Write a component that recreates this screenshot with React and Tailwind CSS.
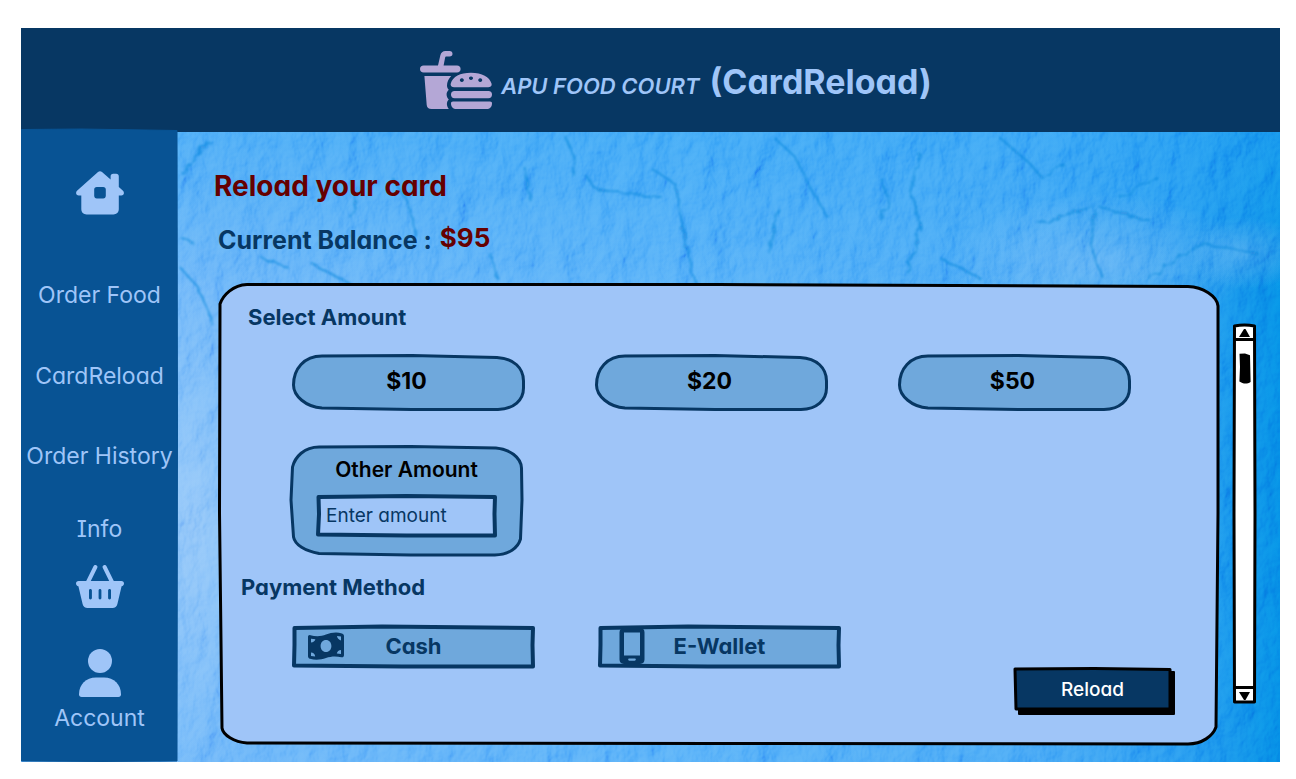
import React from "react";

/* Hand-drawn outline that stretches with the box it decorates. */
function Sketch({ box, d, fill, stroke, width }) {
  return (
    <svg
      aria-hidden="true"
      viewBox={box}
      preserveAspectRatio="none"
      className="pointer-events-none absolute inset-0 -z-10 h-full w-full overflow-visible"
    >
      <path d={d} fill={fill} stroke={stroke} strokeWidth={width} strokeLinejoin="round" vectorEffect="non-scaling-stroke" />
    </svg>
  );
}

function PaperTexture() {
  return (
    <svg
      aria-hidden="true"
      viewBox="0 0 1260 734"
      preserveAspectRatio="none"
      className="pointer-events-none absolute inset-0 -z-10 h-full w-full"
    >
      <defs>
        <linearGradient id="base" x1="0" y1="0" x2="1" y2="0">
          <stop offset="0" stopColor="#6db6fa" />
          <stop offset="0.15" stopColor="#65b1f8" />
          <stop offset="0.5" stopColor="#50acf8" />
          <stop offset="0.8" stopColor="#40a4f5" />
          <stop offset="0.92" stopColor="#1f95ef" />
          <stop offset="1" stopColor="#0488e4" />
        </linearGradient>
        <linearGradient id="top" x1="0" y1="0" x2="0" y2="1">
          <stop offset="0.14" stopColor="#1f9bf3" stopOpacity="0.5" />
          <stop offset="0.36" stopColor="#1f9bf3" stopOpacity="0" />
        </linearGradient>
        <radialGradient id="glow">
          <stop offset="0" stopColor="#a9cff8" stopOpacity="0.6" />
          <stop offset="1" stopColor="#a9cff8" stopOpacity="0" />
        </radialGradient>
        <filter id="crumple" x="0" y="0" width="1" height="1">
          <feTurbulence type="fractalNoise" baseFrequency="0.03 0.02" numOctaves="5" seed="8" />
          <feDiffuseLighting surfaceScale="8" diffuseConstant="0.75" lightingColor="#ffffff">
            <feDistantLight azimuth="215" elevation="42" />
          </feDiffuseLighting>
          <feGaussianBlur stdDeviation="0.7" />
        </filter>
        <filter id="rough" x="-0.1" y="-0.1" width="1.2" height="1.2">
          <feTurbulence type="fractalNoise" baseFrequency="0.08" numOctaves="3" seed="3" />
          <feDisplacementMap in="SourceGraphic" scale="9" />
          <feGaussianBlur stdDeviation="0.8" />
        </filter>
      </defs>
      <rect width="1260" height="734" fill="url(#base)" />
      <rect width="1260" height="734" fill="url(#top)" />
      <ellipse cx="170" cy="500" rx="100" ry="250" fill="url(#glow)" />
      <ellipse cx="1080" cy="235" rx="150" ry="70" fill="url(#glow)" opacity="0.55" />
      <ellipse cx="1225" cy="225" rx="60" ry="36" fill="url(#glow)" opacity="0.4" />
      <rect width="1260" height="734" filter="url(#crumple)" className="opacity-50 mix-blend-soft-light" />
      <g fill="none" stroke="#0b84da" strokeWidth="2" strokeOpacity="0.6" filter="url(#rough)">
        <path d="M545 108 L554 130 L552 148" />
        <path d="M566 148 L574 160 L597 165 L640 168" />
        <path d="M630 140 L654 155 L660 190 L670 240 L678 262" />
        <path d="M754 110 L776 130 L790 160 L808 190 M758 180 L748 225" />
        <path d="M900 125 L892 165 L900 200 L886 245" />
        <path d="M862 150 L868 180 L858 190" />
        <path d="M980 110 L1010 136 L1022 150 L1044 136" />
        <path d="M1016 195 L1076 178 M1076 182 L1070 215 L1082 250" />
        <path d="M1100 170 L1138 150 M1130 192 L1080 180" />
        <path d="M1150 235 L1184 215 L1240 226" />
        <path d="M372 150 L388 176 L396 210 M340 160 L330 190" />
        <path d="M290 235 L310 246 L330 256 M240 230 L268 240" />
        <path d="M160 145 L190 112 M158 208 L172 214 M160 240 L176 258 L186 280 L192 298" />
        <path d="M470 225 L476 250 M505 140 L509 172 M920 230 L960 250 M1128 250 L1150 236" />
      </g>
    </svg>
  );
}

function FoodLogo() {
  return (
    <svg aria-hidden="true" viewBox="0 0 72 58" className="h-[58px] w-[72px] shrink-0" fill="#b4a7d6">
      <path d="M18 14.5 L20.3 4.5 C21 1.5 22.7 0 25.5 0 H29.5 C31.5 0 32.5 1.2 32.5 2.8 C32.5 4.5 31.5 5.6 29.5 5.6 H26.6 C25.6 5.6 25.3 6 25 7.2 L23.6 14.5 H37 C39.2 14.5 40.6 15.9 40.6 18 C40.6 20.2 39.2 21.6 37 21.6 H3.6 C1.4 21.6 0 20.2 0 18 C0 15.9 1.4 14.5 3.6 14.5 Z" />
      <path d="M4.4 25 H31.2 C28.5 28 27 31 27 34.5 C27 36.5 27.8 37.8 28.8 38.7 C27 40.2 26.6 42 26.6 43.4 C26.6 45.3 27.5 47 28.8 48.5 C26.2 51 26.4 55 28.8 58 H11.5 C8.5 58 7 56.6 6.7 54 Z" />
      <path fillRule="evenodd" d="M31 32.5 C32.7 25.8 39.5 21.8 49.3 21.8 C59.5 21.8 66.3 26 68 32.5 C68.6 35 67.2 36.2 65 36.2 H34 C31.6 36.2 30.4 34.8 31 32.5 Z M41 27.3 a1.8 1.8 0 1 0 0.1 0 Z M49.3 25.4 a1.8 1.8 0 1 0 0.1 0 Z M57.7 27.3 a1.8 1.8 0 1 0 0.1 0 Z" transform="translate(-3.3 0) scale(1.1 1)" />
      <rect x="31" y="40" width="41" height="7.2" rx="3.6" />
      <path d="M33 50.6 H70 C71.4 50.6 72 51.3 72 52.4 C72 55.8 69.8 58 66.5 58 H36.5 C33 58 31 55.8 31 52.4 C31 51.3 31.7 50.6 33 50.6 Z" />
    </svg>
  );
}

function HouseIcon() {
  return (
    <svg aria-hidden="true" viewBox="0 0 48 44" className="h-[44px] w-12" fill="currentColor">
      <path
        fillRule="evenodd"
        d="M22 1 C23.3 0 24.7 0 26 1 L34.6 8.6 V5.4 C34.6 3.8 35.6 2.8 37.2 2.8 H40.2 C41.8 2.8 42.8 3.8 42.8 5.4 V15.9 L47 19.8 C48.8 21.6 47.8 24.4 45.3 24.4 H42.8 V38 C42.8 41.4 40.6 43.4 37.4 43.4 H10.6 C7.4 43.4 5.3 41.4 5.3 38 V24.4 H2.8 C0.2 24.4 -0.8 21.6 1 19.8 Z M20.8 16 C19.2 16 18.2 17 18.2 18.6 V24.8 C18.2 26.4 19.2 27.4 20.8 27.4 H27.2 C28.8 27.4 29.8 26.4 29.8 24.8 V18.6 C29.8 17 28.8 16 27.2 16 Z"
      />
    </svg>
  );
}

function BasketIcon() {
  return (
    <svg aria-hidden="true" viewBox="0 0 48 43" className="h-[43px] w-12">
      <path d="M12 17 L19.4 2 M36 17 L28.6 2" fill="none" stroke="currentColor" strokeWidth="4" strokeLinecap="round" />
      <path
        fill="currentColor"
        fillRule="evenodd"
        d="M2.6 16 H45.4 C47 16 48 17 48 18.4 C48 19.8 47 21 45.6 21.2 L41.4 39 C40.8 41.6 39 43 36.4 43 H11.6 C9 43 7.2 41.6 6.6 39 L2.4 21.2 C1 21 0 19.8 0 18.4 C0 17 1 16 2.6 16 Z M14.4 24 C13.6 24 13 24.6 13 25.4 V33 C13 33.8 13.6 34.4 14.4 34.4 S15.9 33.8 15.9 33 V25.4 C15.9 24.6 15.2 24 14.4 24 Z M24 24 C23.2 24 22.6 24.6 22.6 25.4 V33 C22.6 33.8 23.2 34.4 24 34.4 S25.4 33.8 25.4 33 V25.4 C25.4 24.6 24.8 24 24 24 Z M33.6 24 C32.8 24 32.1 24.6 32.1 25.4 V33 C32.1 33.8 32.8 34.4 33.6 34.4 S35 33.8 35 33 V25.4 C35 24.6 34.4 24 33.6 24 Z"
      />
    </svg>
  );
}

function UserIcon() {
  return (
    <svg aria-hidden="true" viewBox="0 0 42 48" className="h-12 w-[42px]" fill="currentColor">
      <circle cx="21" cy="12" r="12" />
      <path d="M17 28.5 H25 C35 28.5 42 35.5 42 45.2 C42 47 41 48 39.4 48 H2.6 C1 48 0 47 0 45.2 C0 35.5 7 28.5 17 28.5 Z" />
    </svg>
  );
}

function CashIcon() {
  return (
    <svg aria-hidden="true" viewBox="0 0 36 28" className="h-7 w-9 shrink-0">
      <path
        fill="currentColor"
        fillRule="evenodd"
        d="M2.4 3.2 C8 4.8 13.5 4.4 18 2.6 C23 0.6 28.5 -0.2 34 1.4 C35.3 1.8 36 2.6 36 4 V23 C36 24.8 34.8 25.5 33.4 25.2 C28 24 23 24.2 18 26 C13 27.8 7.5 28.4 2 26.8 C0.7 26.4 0 25.4 0 24 V5 C0 3.6 1 2.8 2.4 3.2 Z M3 6.8 V10.6 C5.2 10.6 7 9.2 7.4 7.3 Z M3 20.4 V24 L7.2 24.4 C7 22 5.2 20.4 3 20.4 Z M29 4 C29.2 6.2 30.8 8 33 8.4 V4.6 Z M33 18 C30.8 18.2 29.1 19.6 28.8 21.6 L33 22 Z M18 8 C14.8 8 12.6 10.6 12.6 14 C12.6 17.4 14.8 20 18 20 C21.2 20 23.4 17.4 23.4 14 C23.4 10.6 21.2 8 18 8 Z"
      />
    </svg>
  );
}

function PhoneIcon() {
  return (
    <svg aria-hidden="true" viewBox="0 0 26 36" className="h-9 w-[26px] shrink-0">
      <path
        fill="currentColor"
        fillRule="evenodd"
        d="M5 0 H21 C24 0 25.5 1.6 25.5 4.4 V31.6 C25.5 34.4 24 36 21 36 H5 C2 36 0.5 34.4 0.5 31.6 V4.4 C0.5 1.6 2 0 5 0 Z M5 4.4 V27.6 H21 V4.4 Z M10.4 30.6 C9.6 30.6 9.2 31 9.2 31.6 S9.6 32.7 10.4 32.7 H15.6 C16.4 32.7 16.8 32.2 16.8 31.6 S16.4 30.6 15.6 30.6 Z"
      />
    </svg>
  );
}

function AmountButton({ children }) {
  return (
    <button type="button" className="relative isolate h-[57px] pr-1 pb-1 text-[23px] leading-8 font-bold text-black">
      <Sketch
        box="0 0 233 57"
        d="M30 2 L120 1.5 L205 3.5 C222 4.5 231.5 14 231.5 27 V34 C231.5 46 222 55 206 55.5 H120 L30 54 C14 53 1.5 42 1.5 31 C1.5 15 12 2 30 2 Z"
        fill="#6fa8dc"
        stroke="#073763"
        width="3"
      />
      {children}
    </button>
  );
}

function PayButton({ icon, children }) {
  return (
    <button type="button" className="relative isolate grid h-[43px] w-[243px] grid-cols-[36px_1fr_36px] items-center px-4 pb-[2px] text-[22px] leading-8 font-bold text-[#073763]">
      <Sketch
        box="0 0 243 43"
        d="M2.5 3 L90 1.5 L241 3 L240.5 20 L241 41.5 L110 41.5 L2 40.5 L2.5 20 Z"
        fill="#6fa8dc"
        stroke="#073763"
        width="4"
      />
      <span className="flex justify-center">{icon}</span>
      <span>{children}</span>
    </button>
  );
}

function ScrollTrack() {
  return (
    <div className="relative isolate mt-[41px] mb-[42px] flex w-[23px] shrink-0 flex-col">
      <Sketch box="0 0 23 379" d="M1.5 2 C8 0.8 15 0.8 21.5 2 L22 190 L21.5 378 H1.5 L1 190 Z" fill="#fff" stroke="#000" width="3" />
      <button type="button" aria-label="Scroll up" className="flex h-[17px] items-center justify-center border-b-[3px] border-black">
        <svg aria-hidden="true" viewBox="0 0 11 8" className="mt-1 h-2 w-[11px]"><path d="M5 0 H6.5 L11 8 H0 Z" /></svg>
      </button>
      <div className="flex flex-1 justify-center pt-3">
        <svg aria-hidden="true" viewBox="0 0 12 31" className="h-[31px] w-3"><path d="M0.5 0.8 L6 0.6 L11 2.2 L11.6 29 C8 31.4 4 31 0.4 28.6 L1 14 Z" /></svg>
      </div>
      <button type="button" aria-label="Scroll down" className="flex h-[17px] items-center justify-center border-t-[3px] border-black">
        <svg aria-hidden="true" viewBox="0 0 11 8" className="h-2 w-[11px]"><path d="M0 0 H11 L6.5 8 H5 Z" /></svg>
      </button>
    </div>
  );
}

export default function App() {
  return (
    <div className="min-h-screen bg-white pt-7 pr-4 pb-4 pl-[21px] font-['Inter',sans-serif] [font-feature-settings:'cv11','cv08']">
      <div className="relative isolate flex flex-col overflow-hidden">
        <PaperTexture />
        <header className="flex h-[104px] items-center justify-center gap-[9px] bg-[#073763] pl-[51px] text-[#9fc5f8]">
          <FoodLogo />
          <h1 className="flex items-baseline gap-[10px] pt-1">
            <span className="text-[22px] font-semibold italic">APU FOOD COURT</span>
            <span className="text-[34px] leading-10 font-bold">(CardReload)</span>
          </h1>
        </header>

        <div className="flex">
          <nav className="relative isolate -mt-[3px] flex w-[157px] shrink-0 flex-col items-center pt-[42px] pb-7 text-[23px] leading-8 whitespace-nowrap text-[#9fc5f8]">
            <Sketch box="0 0 157 633" d="M0.5 0.5 L60 0 L156 1.5 L156.5 300 L156 632 L80 632.5 L0.5 632 Z" fill="#085394" stroke="#085394" width="1" />
            <a href="#home" aria-label="Home"><HouseIcon /></a>
            <a href="#order" className="mt-16">Order Food</a>
            <a href="#reload" className="mt-[49px]">CardReload</a>
            <a href="#history" className="mt-12">Order History</a>
            <a href="#info" className="mt-[41px]">Info</a>
            <a href="#basket" aria-label="Basket" className="mt-5"><BasketIcon /></a>
            <a href="#account" className="mt-[41px] flex flex-col items-center gap-[5px]">
              <UserIcon />
              Account
            </a>
          </nav>

          <main className="flex min-w-0 flex-1 flex-col pt-[34px] pr-6 pb-[17px] pl-10">
            <h2 className="-ml-1 text-[28px] leading-10 font-bold text-[#660000]">Reload your card</h2>
            <p className="mt-[18px] flex h-8 items-center gap-2 text-[25px] leading-8 font-bold text-[#073763]">
              Current Balance : <strong className="pb-1 text-[26px] font-bold text-[#660000]">$95</strong>
            </p>

            <div className="mt-[27px] flex flex-1 gap-[13px]">
              <form onSubmit={(e) => e.preventDefault()} className="relative isolate flex min-w-0 flex-1 flex-col pt-[18px] pb-[29px]">
                <Sketch
                  box="0 0 1002 462"
                  d="M2 21 C5 12 15 2 29 1.5 L500 1.5 L970 3.5 C985 4 999 13 1000 23 L1000 230 L998 444 C995 453 984 461 970 461 L500 460.5 L29 460 C16 459 5 452 4 445 L1.5 230 Z"
                  fill="#9fc5f8"
                  stroke="#000"
                  width="3"
                />
                <h3 className="pl-[30px] text-[22px] leading-8 font-bold text-[#073763]">Select Amount</h3>
                <div className="mt-[21px] grid grid-cols-3 gap-x-[70px] gap-y-[34px] pr-[89px] pl-[74px]">
                  <AmountButton>$10</AmountButton>
                  <AmountButton>$20</AmountButton>
                  <AmountButton>$50</AmountButton>
                  <label className="relative isolate -ml-[2px] mr-[2px] flex h-[111px] flex-col items-center px-[26px] pt-[9px] text-[21px] leading-8 font-semibold text-black">
                    <Sketch
                      box="0 0 232 111"
                      d="M29 2 L120 1.5 L205 3 C218 4 230 12 230.5 23 L231 55 L229.5 94 C227 103 218 109.5 204 110 H120 L29 108.5 C15 106 5 100 3.5 92 L1 55 L2.5 22 C5 12 14 2 29 2 Z"
                      fill="#6fa8dc"
                      stroke="#073763"
                      width="3"
                    />
                    Other Amount
                    <span className="relative isolate mt-2 block h-[43px] w-full">
                      <Sketch box="0 0 180 43" d="M2.5 3 L90 2 L178 3 L177.5 20 L178 41.5 L90 41.5 L2 40.5 L3 20 Z" fill="#9fc5f8" stroke="#073763" width="4" />
                      <input
                        type="text"
                        placeholder="Enter amount"
                        className="h-full w-full bg-transparent px-[10px] text-[19px] font-normal text-[#073763] outline-none placeholder:text-[#073763]"
                      />
                    </span>
                  </label>
                </div>
                <h3 className="mt-[15px] pl-[23px] text-[22px] leading-8 font-bold text-[#073763]">Payment Method</h3>
                <div className="mt-[22px] flex gap-[63px] pl-[74px]">
                  <PayButton icon={<CashIcon />}>Cash</PayButton>
                  <PayButton icon={<PhoneIcon />}>E-Wallet</PayButton>
                </div>
                <button type="submit" className="relative isolate mr-[45px] h-[48px] w-[161px] self-end pr-1 pb-1 text-[19px] leading-8 font-medium text-white">
                  <Sketch box="0 0 161 48" d="M5 4 H160 V46 H5 Z" fill="#000" stroke="#000" width="2" />
                  <Sketch box="0 0 161 48" d="M1 1 L80 0.5 L156 1.5 V41 H2 Z" fill="#073763" stroke="#000" width="3" />
                  Reload
                </button>
              </form>
              <ScrollTrack />
            </div>
          </main>
        </div>
      </div>
    </div>
  );
}
